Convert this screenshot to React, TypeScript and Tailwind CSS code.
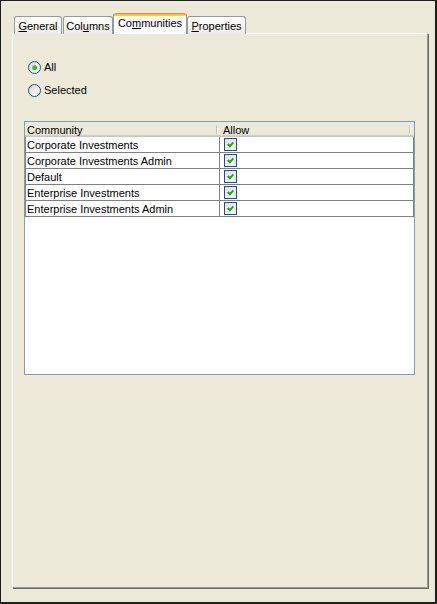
import React from 'react'

const FONT = { fontFamily: '"Liberation Sans", Arial, sans-serif' }

const ROWS = [
  'Corporate Investments',
  'Corporate Investments Admin',
  'Default',
  'Enterprise Investments',
  'Enterprise Investments Admin',
]

type TabProps = {
  children: React.ReactNode
  width: string
  selected?: boolean
  className?: string
}

function Tab({ children, width, selected, className }: TabProps) {
  if (selected) {
    return (
      <div
        className={`relative z-10 flex h-[21px] flex-col rounded-t-[3px] border-x border-[#919b9c] bg-[#fcfcfe] ${width} ${className ?? ''}`}
      >
        <div className="h-[3px] rounded-t-[3px] border-t border-[#e68b2c] bg-[#ffc73c]" />
        <div className="flex flex-1 items-start justify-center pt-[1px] leading-[13px]">{children}</div>
      </div>
    )
  }
  return (
    <div
      className={`flex h-[18px] items-start justify-center rounded-t-[3px] border-x border-t border-[#919b9c] bg-gradient-to-b from-[#ffffff] to-[#ecebe4] pt-[3px] leading-[13px] ${width} ${className ?? ''}`}
    >
      {children}
    </div>
  )
}

function Radio({ checked, label }: { checked?: boolean; label: string }) {
  return (
    <div className="flex h-[13px] items-center">
      <span className="flex h-[13px] w-[13px] items-center justify-center rounded-full border border-[#1c5180] bg-gradient-to-br from-[#dcd9c9] to-[#ffffff]">
        {checked && (
          <span className="h-[5px] w-[5px] rounded-full bg-gradient-to-br from-[#5fe05b] to-[#1c9a1c]" />
        )}
      </span>
      <span className="ml-[3px] leading-[13px]">{label}</span>
    </div>
  )
}

function Checkbox() {
  return (
    <span className="flex h-[13px] w-[13px] items-center justify-center border border-[#1c5180] bg-gradient-to-br from-[#dcdcd7] to-[#ffffff]">
      <svg width="11" height="11" viewBox="0 0 11 11">
        <polyline points="2.8,5 4.8,7.2 8.4,3.4" fill="none" stroke="#21a121" strokeWidth="2.1" />
      </svg>
    </span>
  )
}

function HeaderDivider() {
  return <div className="mt-[3px] h-[9px] w-[2px] border-l border-r border-l-[#c7c5b2] border-r-white" />
}

export default function App() {
  return (
    <div
      className="h-[604px] w-[437px] border-t border-l border-r-2 border-b-2 border-[#1e1e1e] bg-[#ece9d8] text-[11px] text-black"
      style={FONT}
    >
      <div className="pl-[11px] pt-[12px]">
        {/* tab strip */}
        <div className="-mb-px flex items-end pl-[2px]">
          <Tab width="w-[48px]">
            <span>
              <u>G</u>eneral
            </span>
          </Tab>
          <Tab width="w-[50px]" className="ml-px">
            <span>
              Col<u>u</u>mns
            </span>
          </Tab>
          <Tab width="w-[74px]" selected>
            <span>
              Co<u>m</u>munities
            </span>
          </Tab>
          <Tab width="w-[59px]">
            <span>
              <u>P</u>roperties
            </span>
          </Tab>
        </div>

        {/* panel */}
        <div className="h-[555px] w-[416px] border-t border-l border-r border-b border-t-white border-l-white border-r-[#9a9a94] border-b-[#9a9a94] bg-[#ece9d8] shadow-[1px_1px_0_#6b6b66]">
          <div className="flex flex-col gap-[10px] pl-[15px] pt-[27px]">
            <Radio checked label="All" />
            <Radio label="Selected" />
          </div>

          {/* table */}
          <div className="ml-[11px] mt-[24px] h-[254px] w-[391px] border border-[#7f9db9] bg-white">
            <div className="flex h-[15px] bg-[#ebeadb] shadow-[inset_0_-1px_0_#cbc7b8,inset_0_-2px_0_#d6d2c2,inset_0_-3px_0_#e2e2da]">
              <div className="w-[191px] pl-[2px] pt-[2px] leading-[13px]">Community</div>
              <HeaderDivider />
              <div className="w-[191px] pl-[5px] pt-[2px] leading-[13px]">Allow</div>
              <HeaderDivider />
            </div>
            {ROWS.map((name) => (
              <div key={name} className="grid h-[16px] grid-cols-[195px_194px] border-b border-[#808080]">
                <div className="border-l border-r border-[#808080] pl-px pt-px leading-[15px]">{name}</div>
                <div className="flex items-start border-r border-[#808080] pl-[4px] pt-px">
                  <Checkbox />
                </div>
              </div>
            ))}
          </div>
        </div>
      </div>
    </div>
  )
}
